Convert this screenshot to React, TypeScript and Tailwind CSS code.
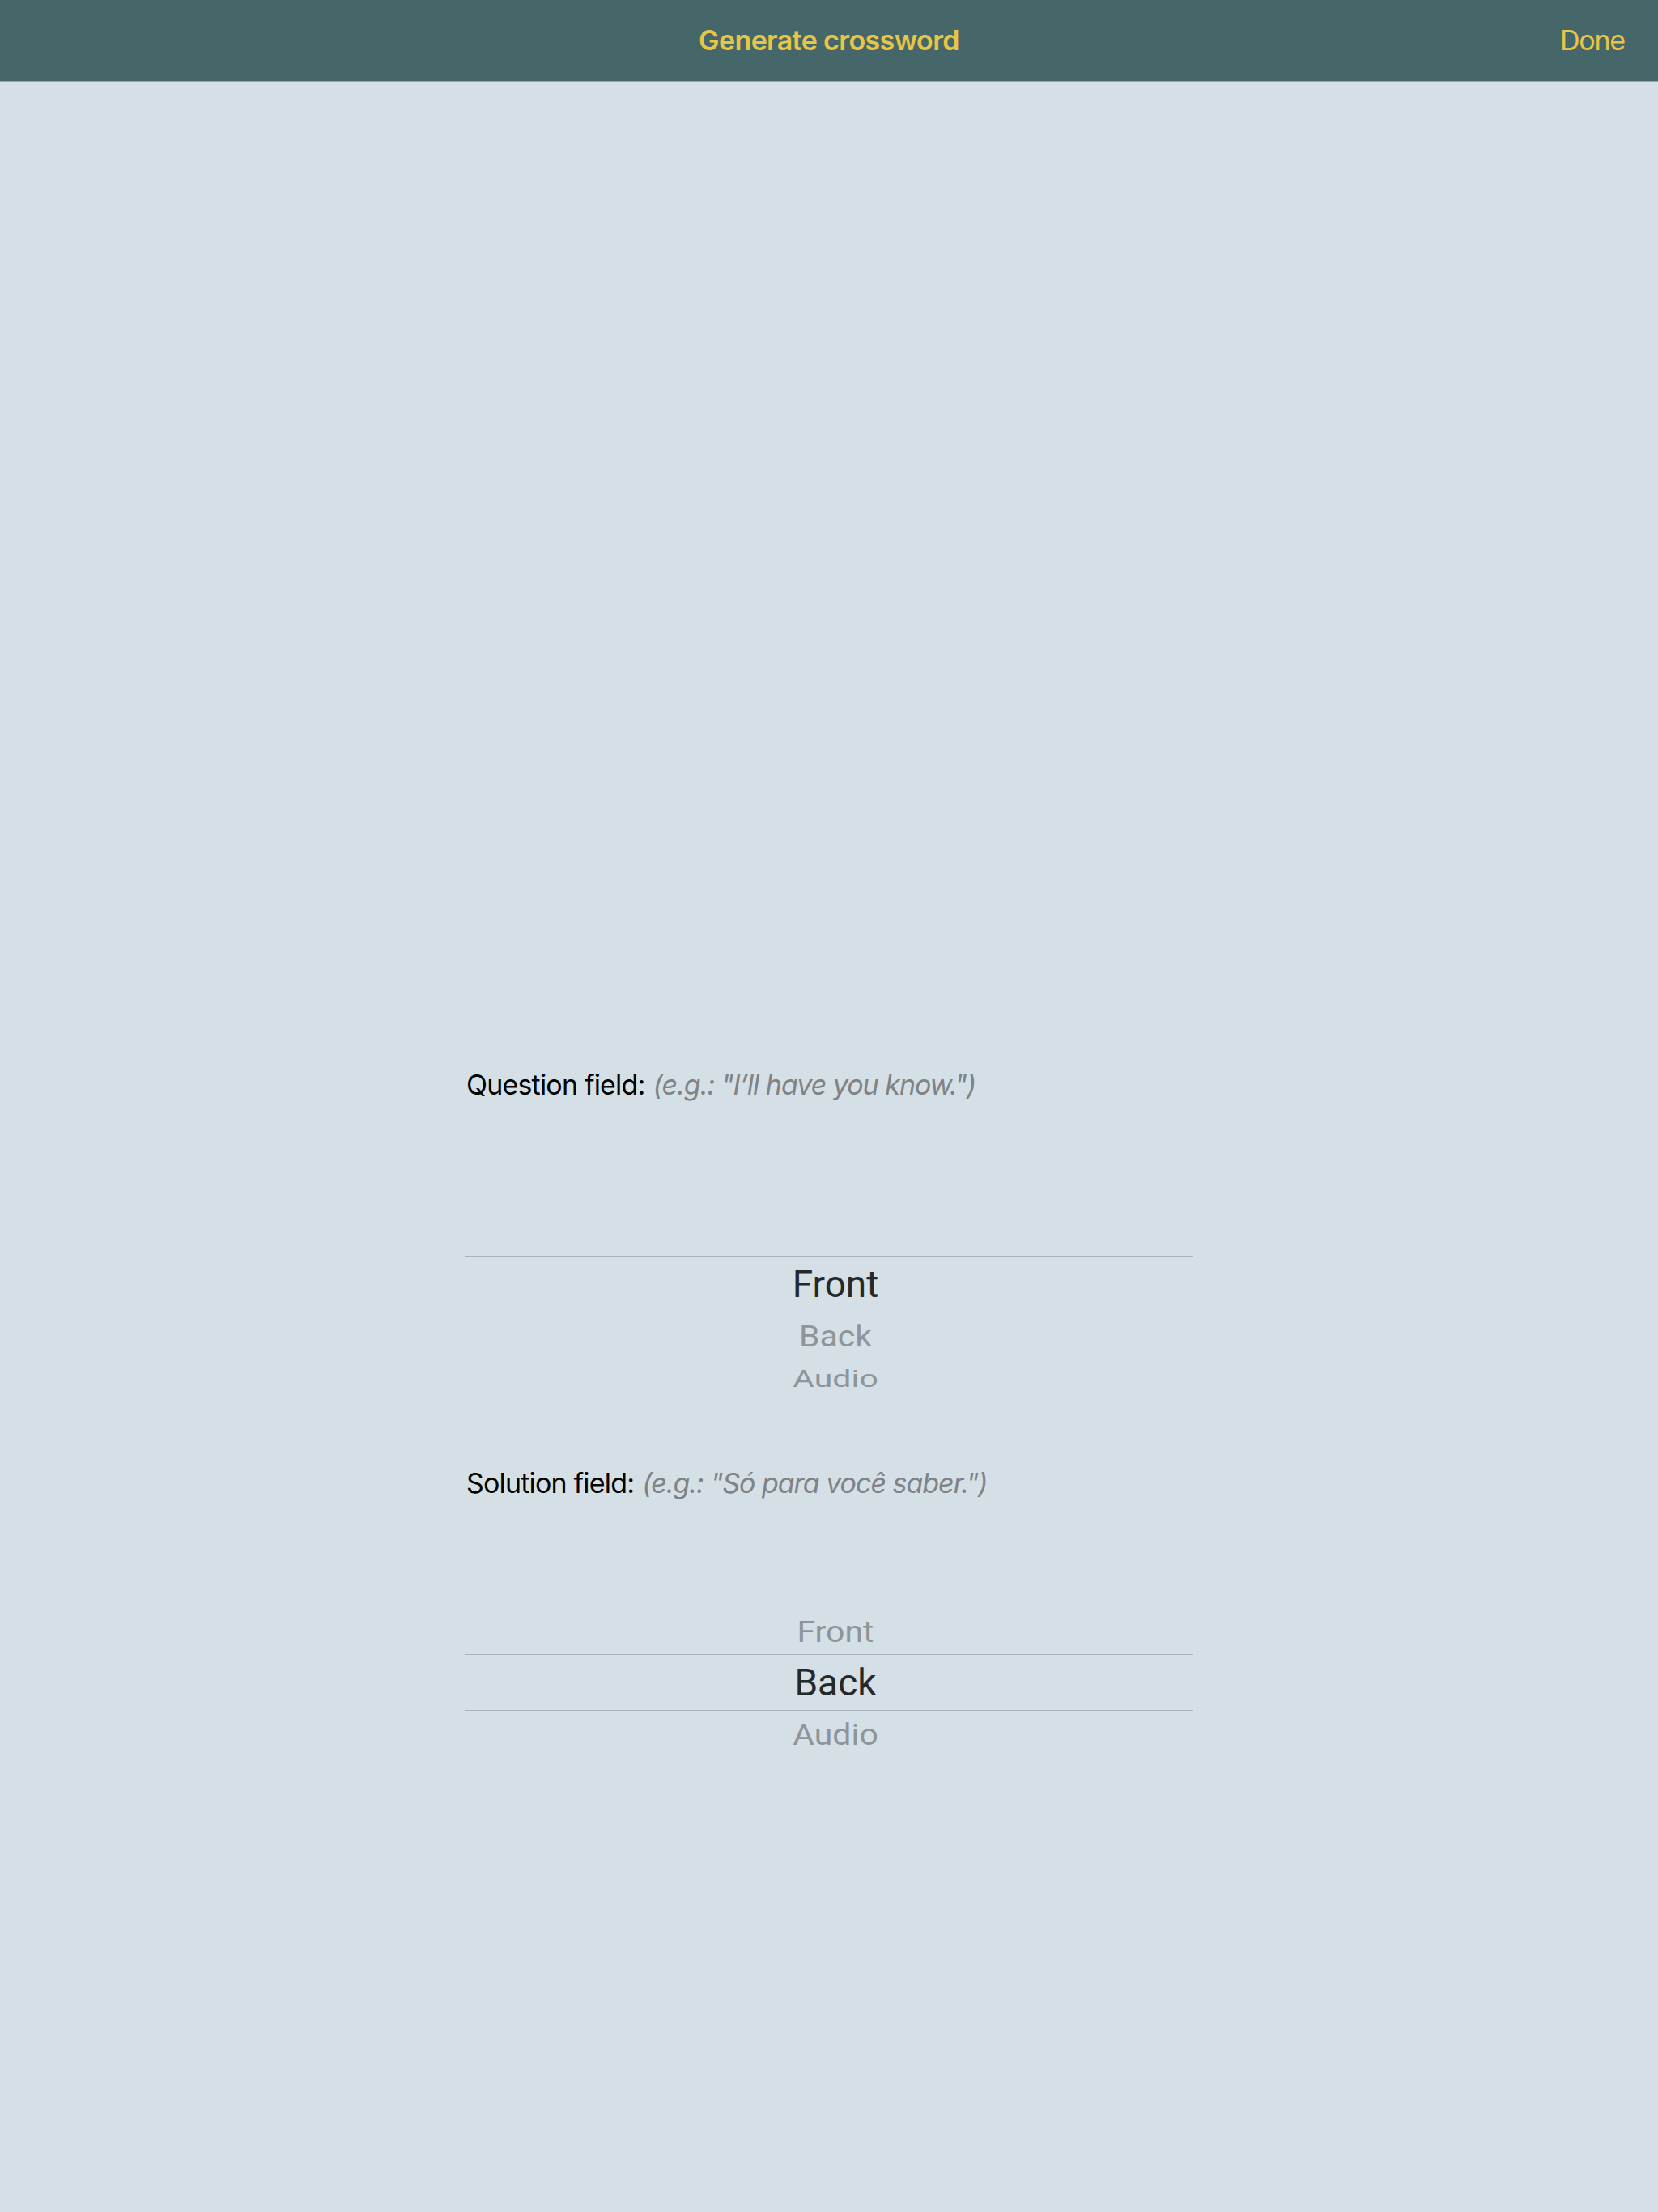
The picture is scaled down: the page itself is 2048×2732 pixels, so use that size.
const PICKER_OPTIONS = ["Front", "Back", "Audio"];

export default function App() {
  return (
    <div className="min-h-screen bg-[#d5e0e6] font-['Inter','Noto_Sans',sans-serif]">
      <header className="relative flex h-[101px] items-center justify-center border-b border-[#9aa6a9] bg-[#466769]">
        <span className="text-[34px] font-semibold leading-none tracking-[-0.018em] text-[#e8c546]">
          Generate crossword
        </span>
        <button className="absolute right-[41px] top-1/2 -translate-y-1/2 text-[34px] leading-none tracking-[-0.035em] text-[#e8c546]">
          Done
        </button>
      </header>

      <main className="mx-auto flex w-[900px] flex-col pt-[1209px]">
        <FieldLabel label="Question field:" hint={'(e.g.: "I’ll have you know.")'} height="h-[60px]" />
        <Picker selected={0} />
        <FieldLabel label="Solution field:" hint={'(e.g.: "Só para você saber.")'} height="h-[60px]" />
        <Picker selected={1} />
      </main>
    </div>
  );
}

function FieldLabel({
  label,
  hint,
  height,
}: {
  label: string;
  hint: string;
  height: string;
}) {
  return (
    <div className={`flex items-center pl-[2px] text-[34px] leading-none ${height}`}>
      <span className="tracking-[-0.024em] text-black">{label}</span>
      <span className="ml-[10px] italic tracking-[-0.03em] text-[#808386]">{hint}</span>
    </div>
  );
}

function Picker({ selected }: { selected: number }) {
  const above = PICKER_OPTIONS.slice(0, selected).reverse();
  const below = PICKER_OPTIONS.slice(selected + 1);

  return (
    <div className="flex h-[432px] flex-col font-['Roboto','Inter',sans-serif]">
      <div className="flex h-[181px] flex-col-reverse">
        {above.map((item, i) => (
          <WheelItem key={item} text={item} distance={i + 1} up />
        ))}
      </div>
      <div className="flex h-[70px] items-center justify-center border-y border-[#a9b4ba]">
        <span className="pl-[16px] text-[46px] leading-none text-[#26292b]">
          {PICKER_OPTIONS[selected]}
        </span>
      </div>
      <div className="flex flex-col">
        {below.map((item, i) => (
          <WheelItem key={item} text={item} distance={i + 1} />
        ))}
      </div>
    </div>
  );
}

function WheelItem({
  text,
  distance,
  up,
}: {
  text: string;
  distance: number;
  up?: boolean;
}) {
  if (distance === 1) {
    return (
      <div className={`flex items-center justify-center ${up ? "h-[56px]" : "h-[58px]"}`}>
        <span className="block pl-[16px] text-[41px] leading-none text-[#8e9599] scale-y-[0.9]">
          {text}
        </span>
      </div>
    );
  }
  return (
    <div className="flex h-[49px] items-center justify-center">
      <span className="block pl-[16px] text-[41px] leading-none text-[#8e9599] scale-y-[0.72]">
        {text}
      </span>
    </div>
  );
}
